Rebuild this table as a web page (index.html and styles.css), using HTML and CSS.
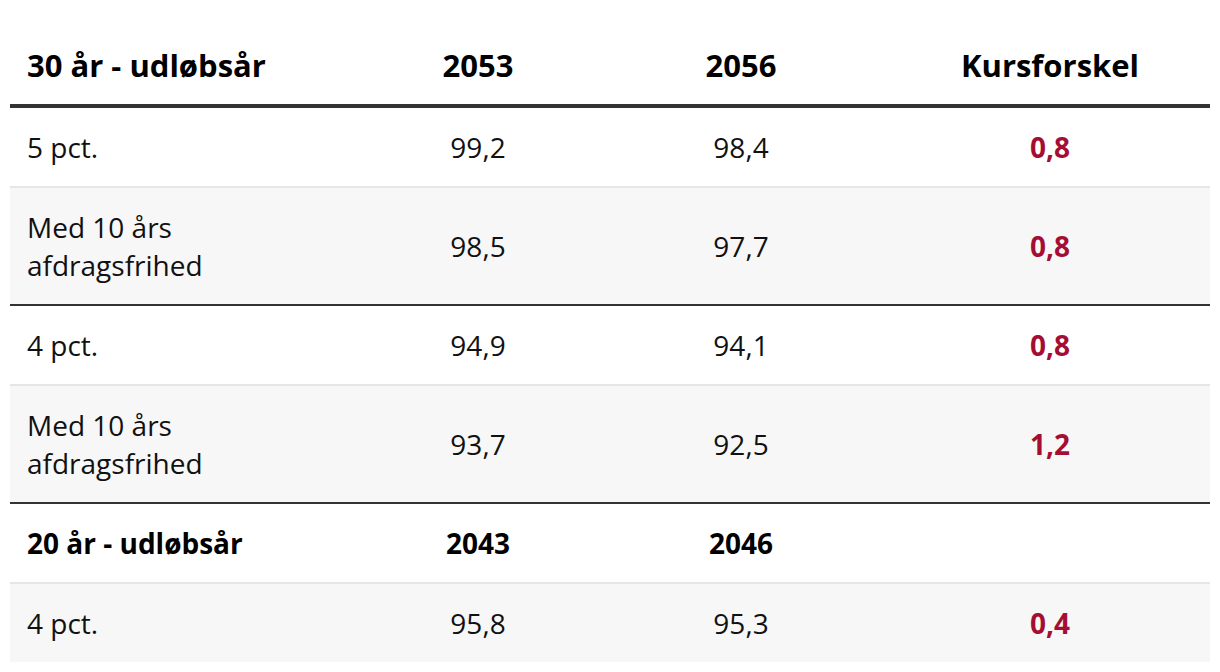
FILE: index.html
```html
<!DOCTYPE html>
<html lang="da">
<head>
<meta charset="utf-8">
<title>Kursforskel</title>
<link rel="stylesheet" href="styles.css">
</head>
<body>
<table class="rates">
  <colgroup>
    <col class="c1"><col class="c2"><col class="c3"><col class="c4">
  </colgroup>
  <thead>
    <tr>
      <th class="label">30 år - udløbsår</th>
      <th>2053</th>
      <th>2056</th>
      <th>Kursforskel</th>
    </tr>
  </thead>
  <tbody>
    <tr class="light">
      <td class="label">5 pct.</td><td>99,2</td><td>98,4</td><td class="diff">0,8</td>
    </tr>
    <tr class="alt dark">
      <td class="label">Med 10 års afdragsfrihed</td><td>98,5</td><td>97,7</td><td class="diff">0,8</td>
    </tr>
    <tr class="light">
      <td class="label">4 pct.</td><td>94,9</td><td>94,1</td><td class="diff">0,8</td>
    </tr>
    <tr class="alt dark">
      <td class="label">Med 10 års afdragsfrihed</td><td>93,7</td><td>92,5</td><td class="diff">1,2</td>
    </tr>
    <tr class="light sub">
      <td class="label">20 år - udløbsår</td><td>2043</td><td>2046</td><td></td>
    </tr>
    <tr class="alt">
      <td class="label">4 pct.</td><td>95,8</td><td>95,3</td><td class="diff">0,4</td>
    </tr>
  </tbody>
</table>
</body>
</html>
```
FILE: styles.css
```css
html, body {
  margin: 0;
  padding: 0;
  background: #ffffff;
}
body {
  padding: 26px 10px 0;
  font-family: "Open Sans", "Noto Sans", sans-serif;
  color: #111111;
}
.rates {
  width: 1200px;
  border-collapse: collapse;
  table-layout: fixed;
  font-size: 28px;
  line-height: 38px;
}
.c1 { width: 354px; }
.c2 { width: 228px; }
.c3 { width: 298px; }
.c4 { width: 320px; }
.rates th,
.rates td {
  padding: 20px 17px;
  text-align: center;
  vertical-align: middle;
}
.rates th {
  font-size: 31px;
  font-weight: 700;
  color: #000000;
}
.rates thead tr {
  border-bottom: 4px solid #333333;
}
.rates .label {
  text-align: left;
}
.rates .alt {
  background: #f7f7f7;
}
.rates .light {
  border-bottom: 2px solid #e6e6e6;
}
.rates .dark {
  border-bottom: 2px solid #333333;
}
.rates .sub td {
  font-weight: 700;
  color: #000000;
}
.rates .diff {
  font-weight: 700;
  color: #a50e34;
}
```
